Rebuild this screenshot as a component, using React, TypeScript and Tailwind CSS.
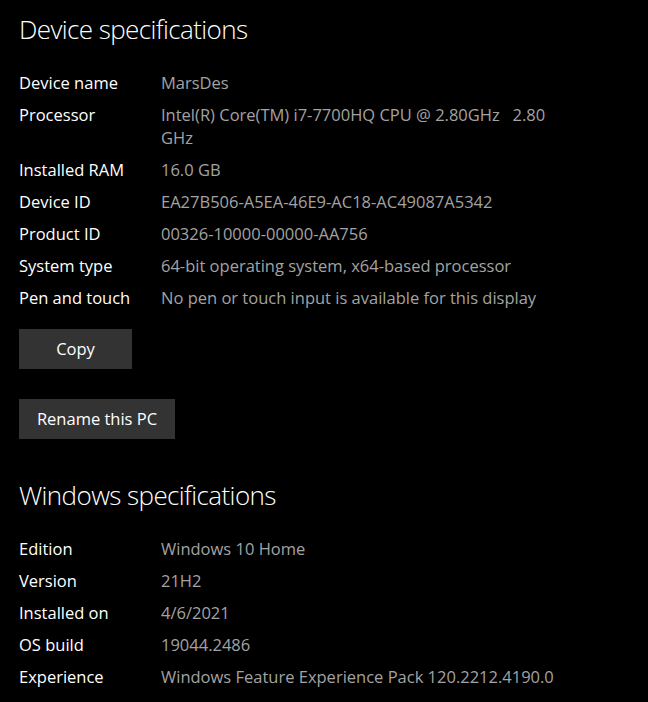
import React from "react";

const font = { fontFamily: '"Open Sans", "Noto Sans", sans-serif' };

function Row({ label, value }: { label: string; value: React.ReactNode }) {
  return (
    <div className="flex leading-[23px] text-[16.5px]">
      <div className="w-[142px] shrink-0 text-white">{label}</div>
      <div className="text-[#a3a3a3] whitespace-pre">{value}</div>
    </div>
  );
}

export default function App() {
  return (
    <div className="w-[648px] h-[702px] bg-black overflow-hidden pl-[19px]" style={font}>
      <h2 className="text-[26px] font-light tracking-[-0.6px] leading-[36px] text-white pt-[11px]">Device specifications</h2>
      <div className="flex flex-col gap-[9px] mt-[24px]">
        <Row label="Device name" value="MarsDes" />
        <Row
          label="Processor"
          value={
            <>
              {"Intel(R) Core(TM) i7-7700HQ CPU @ 2.80GHz   2.80"}
              <br />
              {"GHz"}
            </>
          }
        />
        <Row label="Installed RAM" value="16.0 GB" />
        <Row label="Device ID" value="EA27B506-A5EA-46E9-AC18-AC49087A5342" />
        <Row label="Product ID" value="00326-10000-00000-AA756" />
        <Row label="System type" value="64-bit operating system, x64-based processor" />
        <Row label="Pen and touch" value="No pen or touch input is available for this display" />
      </div>
      <div className="flex flex-col items-start gap-[30px] mt-[20px]">
        <button className="w-[113px] h-[40px] bg-[#333333] text-white text-[16.5px]">Copy</button>
        <button className="w-[156px] h-[40px] bg-[#333333] text-white text-[16.5px]">Rename this PC</button>
      </div>
      <h2 className="text-[26px] font-light tracking-[-0.6px] leading-[36px] text-white mt-[38px]">Windows specifications</h2>
      <div className="flex flex-col gap-[9px] mt-[24px]">
        <Row label="Edition" value="Windows 10 Home" />
        <Row label="Version" value="21H2" />
        <Row label="Installed on" value="4/6/2021" />
        <Row label="OS build" value="19044.2486" />
        <Row label="Experience" value="Windows Feature Experience Pack 120.2212.4190.0" />
      </div>
    </div>
  );
}
